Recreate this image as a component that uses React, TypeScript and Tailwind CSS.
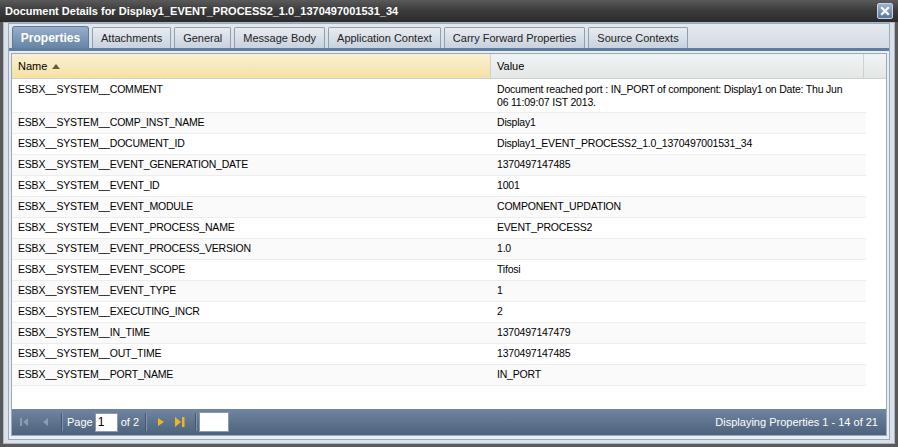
import React from 'react';

const rows: [string, string][] = [
  ['ESBX__SYSTEM__COMP_INST_NAME', 'Display1'],
  ['ESBX__SYSTEM__DOCUMENT_ID', 'Display1_EVENT_PROCESS2_1.0_1370497001531_34'],
  ['ESBX__SYSTEM__EVENT_GENERATION_DATE', '1370497147485'],
  ['ESBX__SYSTEM__EVENT_ID', '1001'],
  ['ESBX__SYSTEM__EVENT_MODULE', 'COMPONENT_UPDATION'],
  ['ESBX__SYSTEM__EVENT_PROCESS_NAME', 'EVENT_PROCESS2'],
  ['ESBX__SYSTEM__EVENT_PROCESS_VERSION', '1.0'],
  ['ESBX__SYSTEM__EVENT_SCOPE', 'Tifosi'],
  ['ESBX__SYSTEM__EVENT_TYPE', '1'],
  ['ESBX__SYSTEM__EXECUTING_INCR', '2'],
  ['ESBX__SYSTEM__IN_TIME', '1370497147479'],
  ['ESBX__SYSTEM__OUT_TIME', '1370497147485'],
  ['ESBX__SYSTEM__PORT_NAME', 'IN_PORT'],
];

const tabs = [
  'Attachments',
  'General',
  'Message Body',
  'Application Context',
  'Carry Forward Properties',
  'Source Contexts',
];

const Sep = ({ className = '' }: { className?: string }) => (
  <div className={`h-[18px] w-[2px] border-l border-[#45566c] border-r border-r-[#8196b0] ${className}`} />
);

const App: React.FC = () => {
  return (
    <div className="flex h-[447px] w-[898px] flex-col bg-[#5a5a5a] font-['Liberation_Sans',Arial,sans-serif] text-[11px] text-black">
      {/* Title bar */}
      <div className="flex h-[22px] shrink-0 items-center justify-between bg-gradient-to-b from-[#5a5a5a] via-[#3a3a3a] to-[#2c2c2c] pl-[5px] pr-[5px]">
        <span className="text-[11px] font-bold text-white">Document Details for Display1_EVENT_PROCESS2_1.0_1370497001531_34</span>
        <div className="flex h-[16px] w-[16px] items-center justify-center rounded-[2px] border border-[#c5d3e2] bg-gradient-to-b from-[#9db4cf] to-[#58779c]">
          <svg width="10" height="10" viewBox="0 0 10 10">
            <path d="M2 2 L8 8 M8 2 L2 8" stroke="#fff" strokeWidth="2.2" strokeLinecap="square" />
          </svg>
        </div>
      </div>

      {/* Window body */}
      <div className="mx-[3px] mb-[3px] flex flex-1 flex-col border border-[#a9b6c5] bg-[#dbe1e8] px-[4px] pb-[3px]">
        <div className="flex flex-1 flex-col border border-[#99aabd] bg-[#e9edf1]">
          {/* Tab strip */}
          <div className="flex h-[24px] shrink-0 items-end gap-[3px] bg-gradient-to-b from-[#e5e9ee] to-[#d4dbe3] pl-[3px]">
            <div className="flex h-[22px] w-[77px] items-center justify-center rounded-t-[3px] border border-b-0 border-[#5d7b9c] bg-gradient-to-b from-[#97afc9] to-[#6685a7] text-[12px] font-bold text-white">
              Properties
            </div>
            {tabs.map((t) => (
              <div
                key={t}
                className="flex h-[21px] items-center rounded-t-[2px] border border-b-0 border-[#8fa0b3] bg-gradient-to-b from-[#e8ecf1] to-[#c8d2dd] px-[8px] text-[#222]"
              >
                {t}
              </div>
            ))}
          </div>
          <div className="h-[3px] shrink-0 bg-[#5f7d9e]" />

          {/* Grid panel */}
          <div className="flex flex-1 flex-col px-[2px] pb-[3px] pt-[2px]">
            <div className="flex flex-1 flex-col border border-[#99aabd] bg-white">
              {/* Header */}
              <div className="flex h-[25px] shrink-0 border-b border-[#d0d0d0]">
                <div className="flex w-[479px] items-center gap-[5px] border-r border-[#d0d0d0] bg-gradient-to-b from-[#fbf0d2] to-[#f5e1a4] pl-[6px]">
                  <span>Name</span>
                  <svg width="8" height="5" viewBox="0 0 8 5" className="mt-[1px]">
                    <path d="M0 5 L4 0 L8 5 Z" fill="#6b5a3c" />
                  </svg>
                </div>
                <div className="flex w-[373px] items-center border-r border-[#d0d0d0] bg-gradient-to-b from-[#f2f4f4] to-[#e2e7e6] pl-[6px]">
                  Value
                </div>
                <div className="flex-1 bg-gradient-to-b from-[#f2f4f4] to-[#e2e7e6]" />
              </div>

              {/* Rows */}
              <div className="w-[854px] text-[10.5px] tracking-[-0.2px]">
                <div className="flex h-[34px] border-b border-[#ededed]">
                  <div className="w-[479px] pl-[6px] pt-[4px] leading-[13px]">ESBX__SYSTEM__COMMENT</div>
                  <div className="w-[375px] pl-[6px] pr-[12px] pt-[4px] leading-[13px]">
                    Document reached port : IN_PORT of component: Display1 on Date: Thu Jun 06 11:09:07 IST 2013.
                  </div>
                </div>
                {rows.map(([n, v], i) => (
                  <div
                    key={n}
                    className={`flex h-[21px] items-center border-b border-[#ededed] ${i % 2 === 0 ? 'bg-[#fafafa]' : 'bg-white'}`}
                  >
                    <div className="w-[479px] pl-[6px]">{n}</div>
                    <div className="w-[375px] pl-[6px]">{v}</div>
                  </div>
                ))}
              </div>
              <div className="flex-1" />

              {/* Paging toolbar */}
              <div className="flex h-[26px] shrink-0 items-center bg-gradient-to-b from-[#6f85a1] to-[#4e627b] pl-[3px] pr-[8px] text-white">
                <div className="flex w-[18px] justify-center">
                  <svg width="10" height="10" viewBox="0 0 10 10">
                    <rect x="1" y="1" width="2" height="8" fill="#8d9cb0" />
                    <path d="M9 1 L4 5 L9 9 Z" fill="#8d9cb0" />
                  </svg>
                </div>
                <div className="ml-[4px] flex w-[16px] justify-center">
                  <svg width="8" height="10" viewBox="0 0 8 10">
                    <path d="M7 1 L2 5 L7 9 Z" fill="#8d9cb0" />
                  </svg>
                </div>
                <Sep className="ml-[8px] mr-[4px]" />
                <span className="text-[11px]">Page</span>
                <div className="ml-[2px] flex h-[19px] w-[23px] items-center border border-[#8c9aa9] bg-white pl-[2px] text-[12px] text-black">1</div>
                <span className="ml-[3px] text-[11px]">of 2</span>
                <Sep className="ml-[6px]" />
                <div className="ml-[6px] flex w-[16px] justify-center">
                  <svg width="8" height="10" viewBox="0 0 8 10">
                    <path d="M1 1 L7 5 L1 9 Z" fill="#f0b429" />
                  </svg>
                </div>
                <div className="ml-[2px] flex w-[18px] justify-center">
                  <svg width="12" height="12" viewBox="0 0 12 12">
                    <path d="M1 1 L7 6 L1 11 Z" fill="#f0b429" />
                    <rect x="8" y="1" width="2.5" height="10" fill="#f0b429" />
                  </svg>
                </div>
                <Sep className="ml-[6px]" />
                <div className="ml-[2px] h-[20px] w-[30px] border border-[#8c9aa9] bg-white" />
                <div className="flex-1" />
                <span className="text-[11px]">Displaying Properties 1 - 14 of 21</span>
              </div>
            </div>
          </div>
        </div>
      </div>
    </div>
  );
};

export default App;
